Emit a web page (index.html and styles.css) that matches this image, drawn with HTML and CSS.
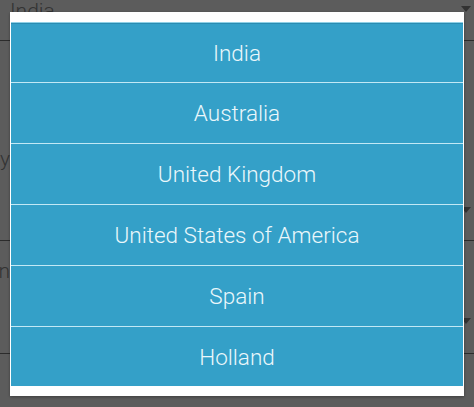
FILE: index.html
```html
<!DOCTYPE html>
<html lang="en">
<head>
<meta charset="utf-8">
<title>Select Country</title>
<link rel="stylesheet" href="styles.css">
</head>
<body>
<form class="form">
  <div class="field field-top">
    <span class="value">India</span>
    <span class="caret caret-top"></span>
  </div>
  <div class="field field-country">
    <div class="label"><span>Select Country</span></div>
    <div class="select select-country"><span class="caret"></span></div>
  </div>
  <div class="field field-region">
    <div class="label"><span>Select Region</span></div>
    <div class="select select-region"><span class="caret"></span></div>
  </div>
</form>

<div class="overlay">
  <div class="modal">
    <ul class="list">
      <li class="item">India</li>
      <li class="item">Australia</li>
      <li class="item">United Kingdom</li>
      <li class="item">United States of America</li>
      <li class="item">Spain</li>
      <li class="item">Holland</li>
    </ul>
  </div>
</div>
</body>
</html>
```

FILE: styles.css
```css
html, body {
  margin: 0;
  padding: 0;
}

body {
  width: 474px;
  height: 407px;
  overflow: hidden;
  background: #ffffff;
  font-family: Roboto, "Liberation Sans", sans-serif;
  position: relative;
}

.form {
  display: flex;
  flex-direction: column;
  color: #8f8f8f;
  font-size: 21px;
  font-weight: 300;
  line-height: 24px;
}

.field-top {
  display: flex;
  justify-content: space-between;
  align-items: flex-start;
  height: 42px;
  margin-top: -1px;
  padding-left: 10px;
  padding-right: 3px;
  box-sizing: border-box;
  border-bottom: 1px solid #7a7a7a;
}

.caret {
  width: 0;
  height: 0;
  border-left: 5px solid transparent;
  border-right: 5px solid transparent;
  border-top: 6px solid #8a8a8a;
}

.caret-top {
  margin-top: 7px;
}

.label {
  width: 10px;
  display: flex;
  justify-content: flex-end;
  white-space: nowrap;
  height: 24px;
}

.field-country {
  padding-top: 106px;
}

.field-region {
  padding-top: 18px;
}

.select {
  display: flex;
  justify-content: flex-end;
  align-items: flex-start;
  box-sizing: border-box;
  border-bottom: 1px solid #7a7a7a;
  padding-right: 3px;
}

.select-country {
  height: 70px;
  padding-top: 36px;
}

.select-region {
  height: 71px;
  padding-top: 35px;
}

.overlay {
  position: fixed;
  inset: 0;
  background: rgba(0, 0, 0, 0.64);
  display: flex;
  padding: 12px 10px 11px;
  box-sizing: border-box;
}

.modal {
  flex: 1;
  background: #ffffff;
  padding: 10px 1px 9px;
  box-shadow: 0 1px 3px rgba(0, 0, 0, 0.35);
  display: flex;
  flex-direction: column;
}

.list {
  list-style: none;
  margin: 0;
  padding: 0;
  display: flex;
  flex-direction: column;
  border-top: 1px solid #8fd0e6;
}

.item {
  height: 60px;
  display: flex;
  align-items: center;
  justify-content: center;
  background: #34a0c8;
  color: #eaf7fb;
  font-size: 22.5px;
  font-weight: 300;
  box-sizing: border-box;
}

.item:first-child {
  height: 59px;
  box-shadow: inset 0 1px 0 #2a8cb2;
}

.item + .item {
  border-top: 1px solid #c2e8f5;
  height: 61px;
}

.item:last-child {
  height: 60px;
}
```
